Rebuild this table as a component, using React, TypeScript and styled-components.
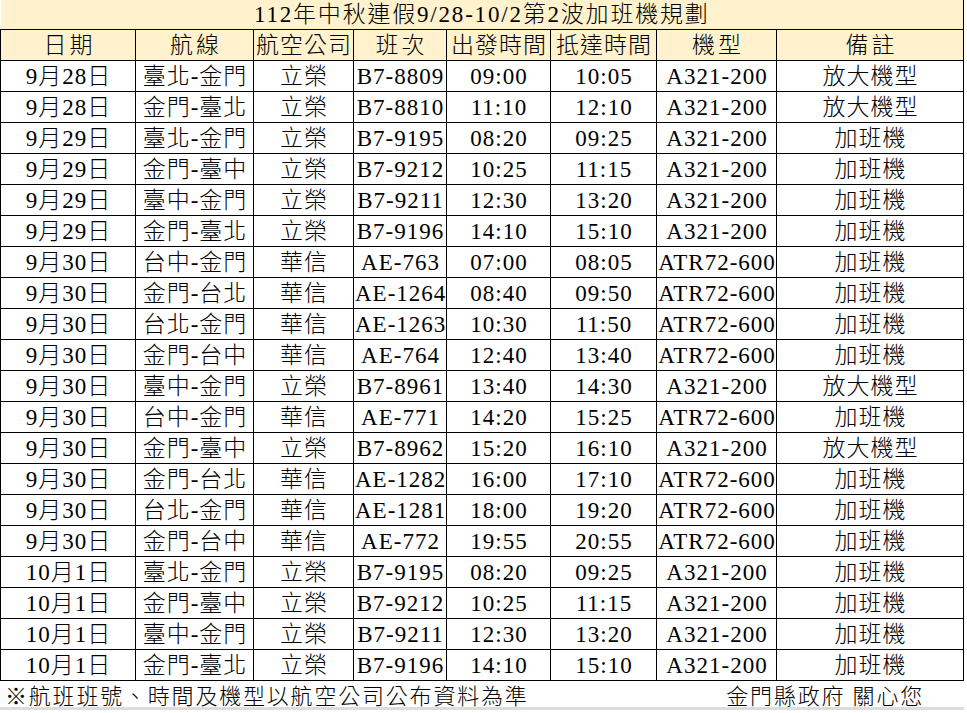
import styled, { createGlobalStyle } from 'styled-components'

const GlobalStyle = createGlobalStyle`
  html, body {
    margin: 0;
    padding: 0;
    background: #ffffff;
  }
  body {
    font-family: "Liberation Serif", "Noto Sans CJK TC", serif;
    font-weight: 300;
    color: #000000;
  }
`

type Flight = [string, string, string, string, string, string, string, string]

const flights: Flight[] = [
  ['9月28日', '臺北-金門', '立榮', 'B7-8809', '09:00', '10:05', 'A321-200', '放大機型'],
  ['9月28日', '金門-臺北', '立榮', 'B7-8810', '11:10', '12:10', 'A321-200', '放大機型'],
  ['9月29日', '臺北-金門', '立榮', 'B7-9195', '08:20', '09:25', 'A321-200', '加班機'],
  ['9月29日', '金門-臺中', '立榮', 'B7-9212', '10:25', '11:15', 'A321-200', '加班機'],
  ['9月29日', '臺中-金門', '立榮', 'B7-9211', '12:30', '13:20', 'A321-200', '加班機'],
  ['9月29日', '金門-臺北', '立榮', 'B7-9196', '14:10', '15:10', 'A321-200', '加班機'],
  ['9月30日', '台中-金門', '華信', 'AE-763', '07:00', '08:05', 'ATR72-600', '加班機'],
  ['9月30日', '金門-台北', '華信', 'AE-1264', '08:40', '09:50', 'ATR72-600', '加班機'],
  ['9月30日', '台北-金門', '華信', 'AE-1263', '10:30', '11:50', 'ATR72-600', '加班機'],
  ['9月30日', '金門-台中', '華信', 'AE-764', '12:40', '13:40', 'ATR72-600', '加班機'],
  ['9月30日', '臺中-金門', '立榮', 'B7-8961', '13:40', '14:30', 'A321-200', '放大機型'],
  ['9月30日', '台中-金門', '華信', 'AE-771', '14:20', '15:25', 'ATR72-600', '加班機'],
  ['9月30日', '金門-臺中', '立榮', 'B7-8962', '15:20', '16:10', 'A321-200', '放大機型'],
  ['9月30日', '金門-台北', '華信', 'AE-1282', '16:00', '17:10', 'ATR72-600', '加班機'],
  ['9月30日', '台北-金門', '華信', 'AE-1281', '18:00', '19:20', 'ATR72-600', '加班機'],
  ['9月30日', '金門-台中', '華信', 'AE-772', '19:55', '20:55', 'ATR72-600', '加班機'],
  ['10月1日', '臺北-金門', '立榮', 'B7-9195', '08:20', '09:25', 'A321-200', '加班機'],
  ['10月1日', '金門-臺中', '立榮', 'B7-9212', '10:25', '11:15', 'A321-200', '加班機'],
  ['10月1日', '臺中-金門', '立榮', 'B7-9211', '12:30', '13:20', 'A321-200', '加班機'],
  ['10月1日', '金門-臺北', '立榮', 'B7-9196', '14:10', '15:10', 'A321-200', '加班機'],
]

const headers = ['日期', '航線', '航空公司', '班次', '出發時間', '抵達時間', '機型', '備註']
const colWidths = [135, 118, 100, 93, 104, 106, 120, 187]

const Sheet = styled.div`
  width: 967px;
  height: 713px;
  overflow: hidden;
  display: flex;
  flex-direction: column;
`

const Table = styled.table`
  width: 964px;
  table-layout: fixed;
  border-collapse: collapse;
  font-size: 23px;
  line-height: 1;
`

const TitleCell = styled.td`
  height: 29px;
  padding: 0;
  background: #fff2cc;
  border-right: 1px solid #000;
  border-bottom: 1px solid #000;
  text-align: center;
  letter-spacing: 1.8px;
  white-space: nowrap;
`

const HeadCell = styled.th<{ $tight?: boolean }>`
  height: 30px;
  padding: 0 0 0 ${(p) => (p.$tight ? 1 : 3)}px;
  background: #fff2cc;
  border: 1px solid #000;
  font-weight: 300;
  text-align: center;
  letter-spacing: ${(p) => (p.$tight ? 1 : 3)}px;
  white-space: nowrap;
`

const Cell = styled.td`
  height: 30px;
  padding: 0 0 0 1px;
  border: 1px solid #000;
  text-align: center;
  letter-spacing: 1px;
  white-space: nowrap;
  overflow: hidden;
`

const Footer = styled.div`
  width: 964px;
  height: 29px;
  display: flex;
  align-items: center;
  justify-content: space-between;
  padding: 0 40px 0 5px;
  box-sizing: border-box;
  font-size: 22px;
  letter-spacing: 1.8px;
  border-bottom: 3px solid #dcdcdc;
`

const FooterNote = styled.span`
  white-space: nowrap;
`

const FooterSign = styled.span`
  white-space: nowrap;
  letter-spacing: 1.8px;
`

export default function App() {
  return (
    <>
      <GlobalStyle />
      <Sheet>
        <Table>
          <colgroup>
            {colWidths.map((w, i) => (
              <col key={i} style={{ width: w }} />
            ))}
          </colgroup>
          <thead>
            <tr>
              <TitleCell colSpan={8}>112年中秋連假9/28-10/2第2波加班機規劃</TitleCell>
            </tr>
            <tr>
              {headers.map((h) => (
                <HeadCell key={h} $tight={h.length > 2}>
                  {h}
                </HeadCell>
              ))}
            </tr>
          </thead>
          <tbody>
            {flights.map((row, i) => (
              <tr key={i}>
                {row.map((v, j) => (
                  <Cell key={j}>{v}</Cell>
                ))}
              </tr>
            ))}
          </tbody>
        </Table>
        <Footer>
          <FooterNote>※航班班號、時間及機型以航空公司公布資料為準</FooterNote>
          <FooterSign>金門縣政府 關心您</FooterSign>
        </Footer>
      </Sheet>
    </>
  )
}
